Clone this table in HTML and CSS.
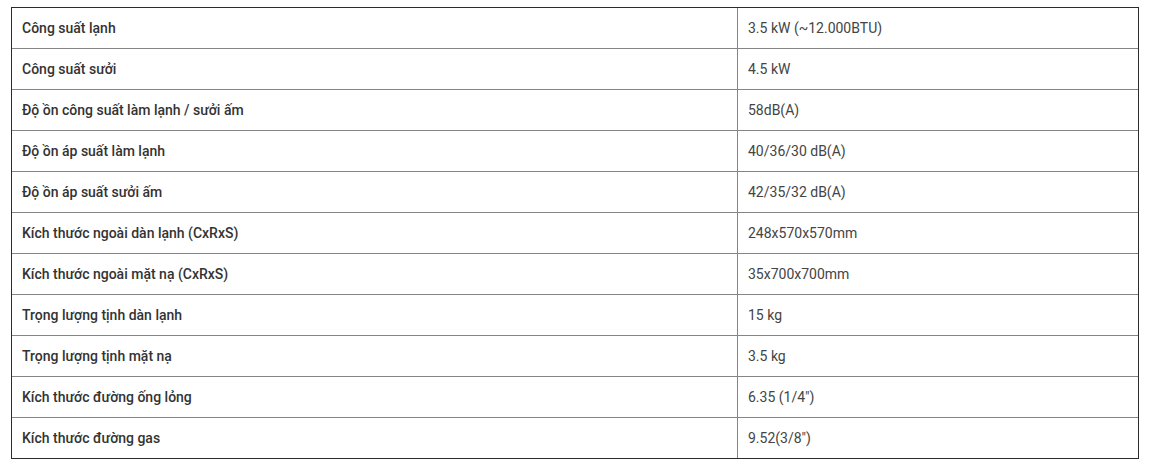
FILE: index.html
```html
<!DOCTYPE html>
<html lang="vi">
<head>
<meta charset="utf-8">
<link rel="stylesheet" href="styles.css">
</head>
<body>
<table class="spec">
<tbody>
<tr><td class="k">Công suất lạnh</td><td class="v">3.5 kW (~12.000BTU)</td></tr>
<tr><td class="k">Công suất sưởi</td><td class="v">4.5 kW</td></tr>
<tr><td class="k">Độ ồn công suất làm lạnh / sưởi ấm</td><td class="v">58dB(A)</td></tr>
<tr><td class="k">Độ ồn áp suất làm lạnh</td><td class="v">40/36/30 dB(A)</td></tr>
<tr><td class="k">Độ ồn áp suất sưởi ấm</td><td class="v">42/35/32 dB(A)</td></tr>
<tr><td class="k">Kích thước ngoài dàn lạnh (CxRxS)</td><td class="v">248x570x570mm</td></tr>
<tr><td class="k">Kích thước ngoài mặt nạ (CxRxS)</td><td class="v">35x700x700mm</td></tr>
<tr><td class="k">Trọng lượng tịnh dàn lạnh</td><td class="v">15 kg</td></tr>
<tr><td class="k">Trọng lượng tịnh mặt nạ</td><td class="v">3.5 kg</td></tr>
<tr><td class="k">Kích thước đường ống lỏng</td><td class="v">6.35 (1/4")</td></tr>
<tr><td class="k">Kích thước đường gas</td><td class="v">9.52(3/8")</td></tr>
</tbody>
</table>
</body>
</html>
```
FILE: styles.css
```css
html, body {
  margin: 0;
  padding: 0;
  background: #fff;
}
body {
  padding: 7px 0 0 11px;
  font-family: Roboto, "Liberation Sans", sans-serif;
  font-size: 14px;
  color: #333;
}
.spec {
  width: 1128px;
  border-collapse: separate;
  border-spacing: 0;
  border: 1px solid #2b2b2b;
  table-layout: fixed;
}
.spec td {
  height: 41px;
  padding: 0 10px 1px;
  box-sizing: border-box;
  line-height: 20px;
  vertical-align: middle;
  border-bottom: 1px solid #858585;
}
.spec tr:last-child td {
  border-bottom: none;
  height: 40px;
}
.spec td.k {
  width: 726px;
  font-weight: 500;
  border-right: 1px solid #858585;
  color: #333;
}
.spec td.v {
  font-weight: 400;
  color: #444;
}
```
